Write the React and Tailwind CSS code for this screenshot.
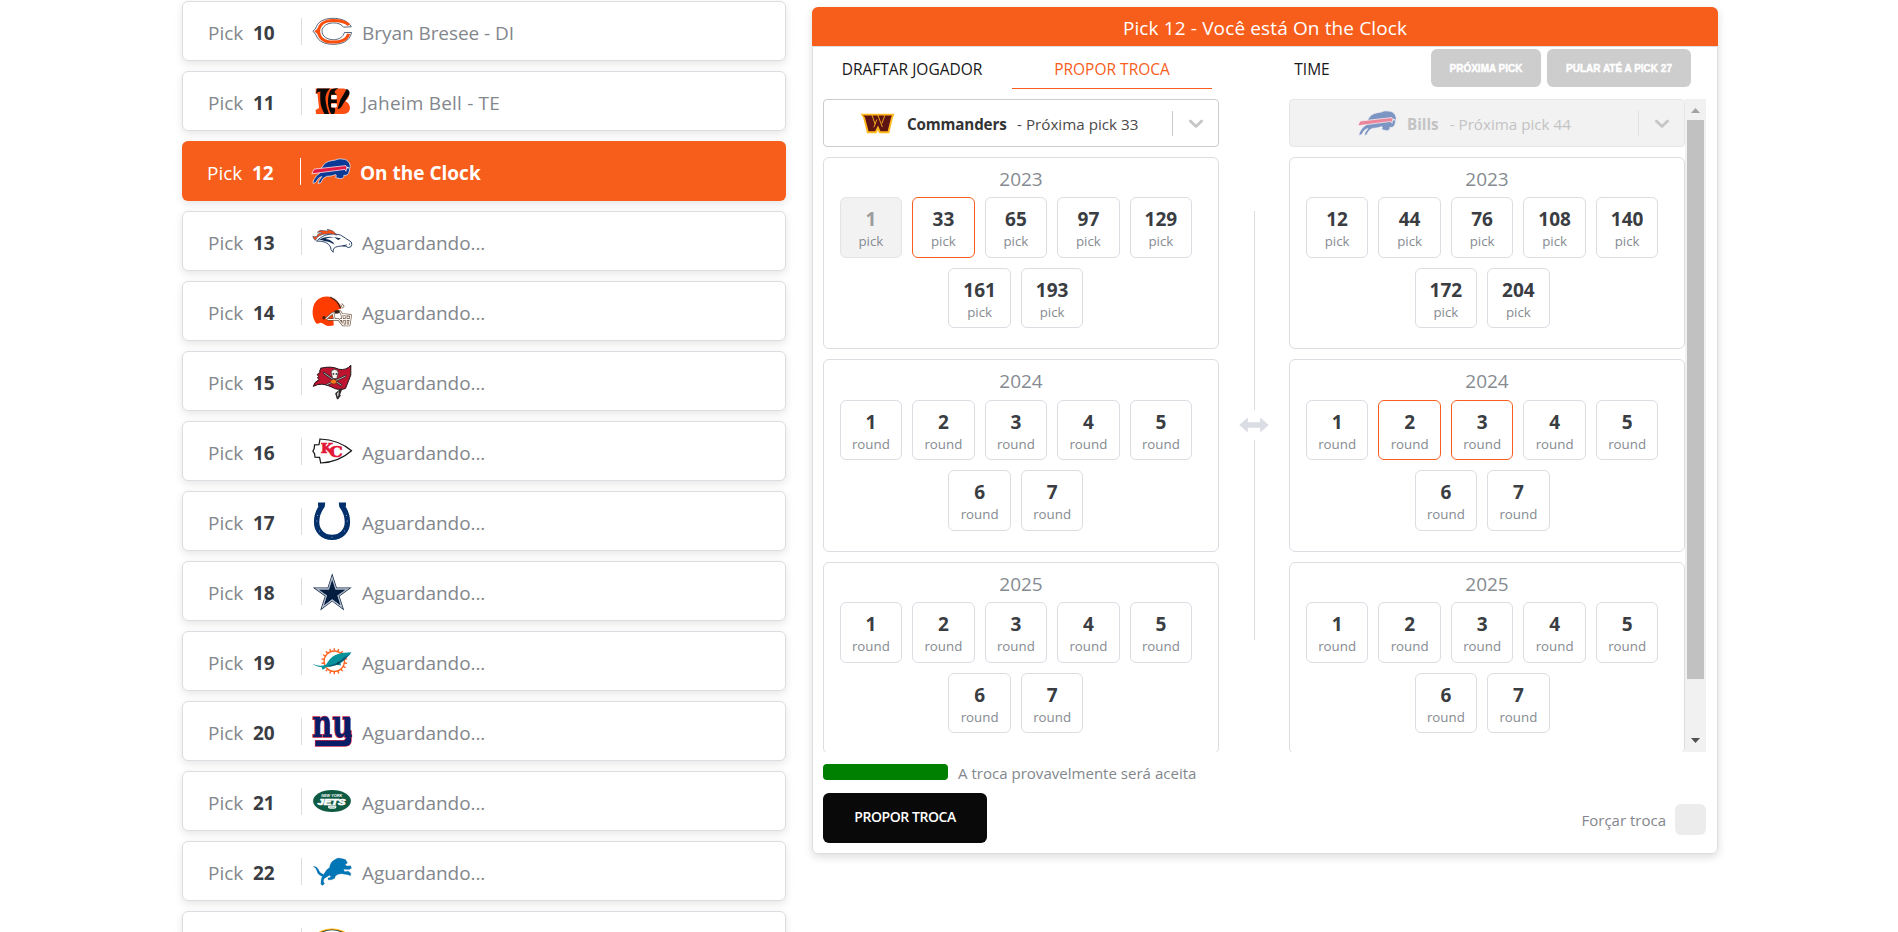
import React from "react";

const STAR = "20.2,2.3 24.8,16.5 39.7,16.5 27.6,25.2 32.2,39.4 20.2,30.6 8.2,39.4 12.8,25.2 0.7,16.5 15.6,16.5";
const RAYS = Array.from({ length: 18 }, (_, i) => i * 20);

function Bears() {
  return (
    <g>
      <path d="M39.3 15.8C36 9.5 28 7.3 21 7.3C12 7.3 6 11 4.5 15.5Q3.5 18.5 .8 20.3Q3.5 22 4.5 25C6.5 30.5 13 33.3 21 33.3C29 33.3 37.5 31 39.6 21.5H32.5C31 26 27 28.7 21.5 28.7C15 28.7 10 25 10 20.3C10 15.5 15 11.9 21.5 11.9C26 11.9 29.5 13.2 31.5 16.2Z" fill="#fff" stroke="#33425c" strokeWidth=".8" />
      <path d="M37 14C33 10.3 27 9.4 21 9.4C12 9.4 7 14 6.6 20.3C7 27 12 31.1 21 31.1C29 31.1 35 28.8 36.7 22.8" fill="none" stroke="#fb4d0c" strokeWidth="3" />
      <path d="M2.4 20.3L7.5 16V24.8Z" fill="#fb4d0c" />
    </g>
  );
}

function Bengals() {
  return (
    <g>
      <path d="M3.8 7.4H32Q38.5 8.5 37 15Q36 18.5 33.2 20Q37.6 22 38 26.5Q38 33 31.5 33H4L3.6 29L7 27L5.5 13L3.6 12.6Z" fill="#fb4f14" />
      <path d="M5 7.5H18Q13 12 13.5 19T17 33H12.5Q8.5 26 8.3 19T8.5 10.5Q6 10.5 4 12.8Z" fill="#070707" />
      <path d="M19 8.6Q23 7 26.4 7.3Q19.5 11 25 13.8H19V18.5H24.8V22H19V26.5H22.5Q24 29.5 22 33H19.2Q15.5 26 16 19T19 8.6Z" fill="#070707" />
      <path d="M34.5 8Q31 15 28.5 18.5L25.5 28Q29 28 31 23L37.3 13.5Q38.5 9 34.5 8Z" fill="#070707" />
      <rect x="19.2" y="14" width="5.6" height="4.2" rx="1.2" fill="#fff" />
      <rect x="19.2" y="22.4" width="5.6" height="4" rx="1.2" fill="#fff" />
    </g>
  );
}

function Bills() {
  return (
    <g strokeLinejoin="round">
      <path d="M10.5 17Q13.5 10.6 20.5 9.7Q24.5 9.3 27 8.1Q29 7.5 31 8.1Q36 8 38.4 12.2Q39.8 14.7 38.8 17L38.3 20Q37.6 25 32.8 24.4Q33.4 27.4 29.6 27.7L24.5 26.6Q26 24.8 24.8 23.6Q21 25.3 15.5 25.4Q11.5 26.6 9.8 31.8L7.2 32.6L8.2 29.4L10.8 25.5Q7.4 26 4.8 31.4L2.2 32.4Q1.6 31.5 2.7 29Q5.2 24 8.5 22.4Z" fill="#0a3a96" stroke="#f3f4f8" strokeWidth=".7" />
      <path d="M3 18.1L34.8 14.6Q36.4 16 35 20.2L33.8 18.4L.8 22.8Z" fill="#e31a45" stroke="#fff" strokeWidth=".7" />
      <path d="M35.5 15.5L38 16.2L37 18.2Z" fill="#fff" />
    </g>
  );
}

function Broncos() {
  return (
    <g strokeLinejoin="round">
      <path d="M4.5 20Q12 12.6 22 12.8Q29 13 33.5 17.2L39.3 21Q40.6 24 38.6 26Q36 27.3 33.8 25.3Q30 24.5 26.3 25.4Q20.4 26.2 21.2 31.2Q18.3 29 18.5 26Q17 22.8 13.4 21.3Q9 19.8 4.5 20Z" fill="#fff" stroke="#1b355b" strokeWidth=".9" />
      <path d="M6.8 18.6Q14.5 14.5 22.5 16.2Q16 16.3 13.5 18.1Q20 18.7 22.5 23.5Q17.4 20.4 12.5 20Q9.3 19 6.8 18.6Z" fill="#0c2a52" />
      <path d="M22 16L29 17.6L26.2 19Z" fill="#0c2a52" />
      <path d="M3.2 19.4Q6 13.5 14 13Q21 12.1 24.7 14.2Q21.5 8.7 15 8.4Q18.5 10.4 12.5 9.7Q7.2 8.5 5.4 11.3Q9.4 10.6 10.2 12.2Q5.4 11.8 5 15.3Q3 16.4 .8 15.1Q1 17.5 3.2 19.4Z" fill="#fb4f14" stroke="#1b355b" strokeWidth=".5" />
      <path d="M30.5 24.8L34.8 24M37 23.4L38 22.8" stroke="#1b355b" strokeWidth="1" />
    </g>
  );
}

function Browns() {
  return (
    <g>
      <path d="M4.3 32.5Q.4 27.5 .6 20Q1.2 11.5 6.5 8Q13.5 3.8 20.3 7Q28 10.2 29.7 17.2L22.6 20.2Q20.5 23 21.2 26.8L21.8 34.3Q15.5 35.9 12.5 33.4Q8.5 30.6 6.3 32.8Z" fill="#ff3c00" />
      <path d="M18.5 6.1Q25.5 8.8 28.5 17.2" fill="none" stroke="#382016" strokeWidth="1.4" />
      <path d="M19.6 6Q26.5 8.3 29.7 16.6" fill="none" stroke="#f5eee7" strokeWidth=".8" />
      <circle cx="12" cy="26.7" r="1.8" fill="#50200d" />
      <path d="M29.3 16.5L31.2 15.3L29.2 13.1M13.8 27.8L20.5 22.2L28 20.5L30 23.4L38.7 24.3L37.2 34.1L31 34L26.5 28.5H15.5M29.7 23.4L31.5 34M34 24L34.4 34M21 22.2L22.5 28.5M28 28.5H38" fill="none" stroke="#6d5543" strokeWidth="2.4" strokeLinejoin="round" />
      <path d="M29.3 16.5L31.2 15.3L29.2 13.1M13.8 27.8L20.5 22.2L28 20.5L30 23.4L38.7 24.3L37.2 34.1L31 34L26.5 28.5H15.5M29.7 23.4L31.5 34M34 24L34.4 34M21 22.2L22.5 28.5M28 28.5H38" fill="none" stroke="#fffaf5" strokeWidth="1.1" strokeLinejoin="round" />
      <ellipse cx="25" cy="20.8" rx="2.8" ry="1.8" fill="#382016" />
    </g>
  );
}

function Buccaneers() {
  return (
    <g strokeLinejoin="round" strokeLinecap="round">
      <path d="M38.5 5L26 37" stroke="#2b2727" strokeWidth="1.5" />
      <path d="M9 7.2Q19 4.5 27 8.3Q34 9.6 38.8 4.4L38.8 14L33.5 27.5Q26.5 30 20 26.2Q9.5 20.6 1.3 25.4Q2 21 7.2 18.6Q4 16.8 6.6 15.4Q3.5 13 8 11.8Q6.8 10 9 7.2Z" fill="#bd1530" stroke="#24191c" strokeWidth="1" />
      <path d="M12 12L29 24M33.5 15L15 23.8" stroke="#32292c" strokeWidth="2.2" />
      <path d="M12.2 12.2L29 24M33.3 15.2L15 23.6" stroke="#cfc8c8" strokeWidth=".8" />
      <path d="M19.2 11.4Q19.2 8.5 22.6 8.5T26.2 11.8L25.5 14.8L24.8 17.6H20.8L20 15Z" fill="#f6f3f1" stroke="#40383b" strokeWidth=".8" />
      <circle cx="21.4" cy="12.9" r=".9" fill="#332b2c" />
      <circle cx="24.4" cy="12.9" r=".9" fill="#332b2c" />
      <ellipse cx="21.6" cy="20.7" rx="3.2" ry="2.2" fill="#ff7a1a" stroke="#46241a" strokeWidth=".5" />
      <path d="M28.5 28L26.6 33M27.5 29.5L24 32.5L25.5 37.5L28 34.5" fill="none" stroke="#2f2c2c" strokeWidth="1.6" />
      <path d="M26.5 31L25.8 34.8" stroke="#bdbaba" strokeWidth="1" />
    </g>
  );
}

function Chiefs() {
  return (
    <g>
      <path d="M8 8Q27 9 39.5 19.7Q27 31 8.7 32L7.6 26.4L3 26.2L2.6 22.7L.9 20.2L2.2 17.5L2.5 13.9L7 13.6Z" fill="#fff" stroke="#151515" strokeWidth="1.2" />
      <text x="8.8" y="22" fontSize="13" fontFamily="DejaVu Serif, serif" fontWeight="700" fill="#e31837" stroke="#e31837" strokeWidth=".7" textLength="22" lengthAdjust="spacingAndGlyphs">
        K<tspan dx="-3.6" dy="3.8" fontSize="15.5">C</tspan>
      </text>
    </g>
  );
}

function Colts() {
  return (
    <g>
      <path d="M10.5 4.3C6.9 9 4.6 14.5 4.6 21C4.6 30 11 36.4 20 36.4S35.4 30 35.4 21C35.4 14.5 33.1 9 29.5 4.3" fill="none" stroke="#03306b" strokeWidth="5.4" />
      <path d="M6 1.6L13.2 1.4L12.8 5.4L10.8 7.6L6 5Z M26.8 1.4L34 1.6L34 5L29.2 7.6L27.2 5.4Z" fill="#03306b" />
      <g fill="#b9c8d8">
        <circle cx="5.7" cy="14.4" r=".5" /><circle cx="4.8" cy="20" r=".5" /><circle cx="7.6" cy="30" r=".5" />
        <circle cx="20" cy="36.3" r=".5" /><circle cx="32.4" cy="30" r=".5" /><circle cx="35.2" cy="20" r=".5" /><circle cx="34.3" cy="14.4" r=".5" />
      </g>
    </g>
  );
}

function Cowboys() {
  return (
    <g>
      <polygon points={STAR} fill="#13294b" />
      <polygon points={STAR} fill="#d5dbe3" transform="translate(20.2 22.8) scale(.88) translate(-20.2 -22.8)" />
      <polygon points={STAR} fill="#6f819b" transform="translate(20.2 22.8) scale(.8) translate(-20.2 -22.8)" />
      <polygon points={STAR} fill="#fff" transform="translate(20.2 22.8) scale(.75) translate(-20.2 -22.8)" />
      <polygon points={STAR} fill="#041e42" transform="translate(20.2 22.8) scale(.7) translate(-20.2 -22.8)" />
    </g>
  );
}

function Dolphins() {
  return (
    <g>
      <circle cx="22.3" cy="20.2" r="10.2" fill="#fff" stroke="#fc6a22" strokeWidth="1.4" />
      <g stroke="#fc5a1c" strokeWidth="1.3">
        {RAYS.map((a) => (
          <path key={a} d="M22.3 9.8V7.2" transform={`rotate(${a} 22.3 20.2)`} />
        ))}
      </g>
      <path d="M.5 22.8Q7 26.3 14 23.7Q19 14.3 27.3 12.8Q30.5 11.3 33 11.8Q36.5 11 39.3 11.3Q38.8 13.2 35.3 15.4Q32.5 19.8 28.5 22Q29.3 23.4 28.7 24.5Q26 24 24.4 23.6Q18.5 26.2 13.5 26.2Q13.4 28 10.2 28.4Q10.5 26.8 9.2 26.1Q3.5 25.8 .5 22.8Z" fill="#08929b" />
      <path d="M16 24.7Q27 22.6 31.4 16.7L38.8 12.8Q34 17.4 31 20Q24.5 25.6 16 25.6Z" fill="#075a76" />
      <path d="M27 20.3L26 24.5L24.8 22Z" fill="#07384f" />
    </g>
  );
}

function Giants() {
  return (
    <g>
      <path d="M3.6 29.7H31.5Q34.2 29.5 34.2 26V20H39V30Q38.5 35 33 35H3.6Z" fill="#071d67" stroke="#c42a4e" strokeWidth="1.4" paintOrder="stroke" />
      <text x="0" y="26.2" fontSize="38.6" fontFamily="DejaVu Serif, serif" fontWeight="700" fill="#071d67" stroke="#c42a4e" strokeWidth="1.4" paintOrder="stroke" textLength="40.3" lengthAdjust="spacingAndGlyphs">nu</text>
      <path d="M34.3 7V27Q34 30 31.5 30.4V34.4Q38.3 35.5 38.5 30V7Z" fill="#071d67" />
    </g>
  );
}

function Jets() {
  return (
    <g fontFamily="Liberation Sans, sans-serif" fontWeight="700" fontStyle="italic" fill="#fff">
      <ellipse cx="20" cy="20" rx="18.9" ry="11" fill="#0f5a42" />
      <text x="9.3" y="16.2" fontSize="4" textLength="21" lengthAdjust="spacingAndGlyphs">NEW YORK</text>
      <text x="5.6" y="23.6" fontSize="8.8" stroke="#fff" strokeWidth=".7" textLength="28" lengthAdjust="spacingAndGlyphs">JETS</text>
      <ellipse cx="20.2" cy="25.8" rx="4.2" ry="2.3" />
      <path d="M16.5 24.8H24M17.5 27H23" stroke="#0f5a42" strokeWidth=".6" />
    </g>
  );
}

function Lions() {
  return (
    <path
      d="M1.2 15.6Q4.6 14.8 6.2 18Q7.5 22 11.6 23.5Q13.5 18.8 17.5 16.5Q18.3 11 22.5 8.8Q25.8 6 28.5 7.3L33.5 8.4L35.5 12L33.2 13.6L34.8 15L38.7 14.8L39.5 17.2L37 18.6L31.6 18.3L32.4 20.4L36.4 20.2L38.8 22.2L38.5 24.7L35.8 23.7L29.5 22.8Q25 23 23.2 25.4L22.8 27.2L19.6 28.8L16 28.8V27L19 26L17.5 24.3Q14 26.6 11.8 28L11.5 31L12.6 32.5L10.8 34.4L8.8 33.2L9.2 28.5L10.2 25.2Q5.8 24 4.8 19.7Q4.3 17 1.2 15.6Z"
      fill="#0076b6"
      stroke="#c8d2dc"
      strokeWidth=".8"
      paintOrder="stroke"
    />
  );
}

function Packers() {
  return (
    <g>
      <ellipse cx="20" cy="20" rx="19" ry="12.6" fill="#ffb612" />
      <ellipse cx="20" cy="20" rx="17.8" ry="11.5" fill="#203731" />
      <ellipse cx="20" cy="20" rx="13" ry="8.6" fill="none" stroke="#fff" strokeWidth="4.5" />
      <path d="M20 19H37V23H20Z" fill="#fff" />
    </g>
  );
}

function Commanders() {
  return (
    <g>
      <path d="M.8 8.8H39.4L37.6 13.4L33.4 31H21.8L20.4 27.6L18.8 31H8L3.6 13.4Z" fill="#ffb81c" />
      <path d="M3.6 10.8H36.6L35.6 12.8L31.6 28.8H23.4L20.6 22.4L17.2 28.8H9.8L5.6 12.8Z" fill="#5f1414" />
      <path d="M13.4 9.6L17.4 21M19.2 15.4L15.8 24.4M20 9.6L25.6 24M28.4 10.6L25 20" fill="none" stroke="#ffb81c" strokeWidth="1" />
    </g>
  );
}

function Logo({ team: Team, className = "size-10" }) {
  return (
    <svg viewBox="0 0 40 40" className={`${className} shrink-0 overflow-visible`} aria-hidden="true">
      <Team />
    </svg>
  );
}

const WAITING = "Aguardando...";

const PICKS = [
  [10, Bears, "Bryan Bresee - DI", "tracking-[-0.05px]"],
  [11, Bengals, "Jaheim Bell - TE", "tracking-[0.2px]"],
  [12, Bills, "On the Clock", "font-bold tracking-[0px]"],
  [13, Broncos, WAITING],
  [14, Browns, WAITING],
  [15, Buccaneers, WAITING],
  [16, Chiefs, WAITING],
  [17, Colts, WAITING],
  [18, Cowboys, WAITING],
  [19, Dolphins, WAITING],
  [20, Giants, WAITING],
  [21, Jets, WAITING],
  [22, Lions, WAITING],
  [23, Packers, WAITING],
];

function PickRow({ number, team, label, labelClass = "tracking-[-0.07px]" }) {
  const active = number === 12;
  return (
    <li
      className={
        "flex h-[60px] shrink-0 items-center rounded-md text-[19px] leading-6 shadow-[0_3px_8px_rgba(0,0,0,0.1)] " +
        (active ? "bg-[#f75e1c] pl-[25px] text-white" : "border border-[#dcdde3] bg-white pl-[25px] text-[#83878d]")
      }
    >
      <span className="w-[45px] pt-1">Pick</span>
      <span className={"w-[48px] pt-1 font-bold " + (active ? "text-white" : "text-[#3a3d42]")}>{number}</span>
      <span className={"h-[27px] w-px " + (active ? "bg-white" : "bg-[#dcdde3]")} />
      <span className="ml-2.5 flex">
        <Logo team={team} />
      </span>
      <span className={(active ? "ml-[9px] " : "ml-2.5 ") + "pt-1 " + labelClass}>{label}</span>
    </li>
  );
}

function PickCard({ value, unit, state }) {
  const look =
    state === "selected"
      ? "border-[#f75e1c] bg-white"
      : state === "disabled"
        ? "border-[#e3e4e7] bg-[#f2f2f2]"
        : "border-[#dcdde3] bg-white";
  return (
    <div className={"flex h-[60.6px] w-[62.5px] flex-col items-center rounded-md border pt-[9px] " + look}>
      <span className={"text-[19px] leading-6 font-bold " + (state === "disabled" ? "text-[#9d9d9d]" : "text-[#3a3d42]")}>{value}</span>
      <span className="text-[13.3px] leading-5 text-[#868b91]">{unit}</span>
    </div>
  );
}

function YearCard({ year, values, unit, selected = [], disabled = [], inset = "ml-[15.6px]" }) {
  return (
    <section className="h-[192.4px] shrink-0 rounded-md border border-[#dcdde3] pt-[9px]">
      <h3 className="mb-[6.2px] text-center text-[19px] leading-6 text-[#868b91]">{year}</h3>
      <div className={"flex w-[352.6px] flex-wrap justify-center gap-[10px] " + inset}>
        {values.map((v) => (
          <PickCard
            key={v}
            value={v}
            unit={unit}
            state={selected.includes(v) ? "selected" : disabled.includes(v) ? "disabled" : "normal"}
          />
        ))}
      </div>
    </section>
  );
}

function Chevron() {
  return (
    <svg viewBox="0 0 20 20" className="size-6" fill="#c6c6c6" aria-hidden="true">
      <path d="M4.516 7.548c0.436-0.446 1.043-0.481 1.576 0l3.908 3.747 3.908-3.747c0.533-0.481 1.141-0.446 1.574 0 0.436 0.445 0.408 1.197 0 1.615-0.406 0.418-4.695 4.502-4.695 4.502-0.217 0.223-0.502 0.335-0.787 0.335s-0.57-0.112-0.789-0.335c0 0-4.287-4.084-4.695-4.502s-0.436-1.17 0-1.615z" />
    </svg>
  );
}

const ROUNDS = [1, 2, 3, 4, 5, 6, 7];

function Tab({ children, active }) {
  return (
    <div
      className={
        "flex h-[42px] w-[200px] justify-center pt-[10px] text-[15.5px] leading-6 " +
        (active ? "border-b border-[#f75e1c] text-[#f75e1c]" : "text-[#17181a]")
      }
    >
      {children}
    </div>
  );
}

function SkipButton({ children, className }) {
  return (
    <button className={"h-[38px] rounded-md bg-[#cdcdcd] pt-px font-['Liberation_Sans',sans-serif] text-[10px] font-bold whitespace-nowrap text-white [-webkit-text-stroke:0.4px_white] " + className}>
      {children}
    </button>
  );
}

export default function App() {
  return (
    <main className="flex h-[932px] w-full items-start overflow-hidden bg-white pl-[182px] font-['Open_Sans','Noto_Sans',sans-serif]">
      <ul className="flex h-[932px] w-[604px] flex-col gap-[10px] pt-px">
        {PICKS.map(([number, team, label, labelClass]) => (
          <PickRow key={number} number={number} team={team} label={label} labelClass={labelClass} />
        ))}
      </ul>

      <div className="mt-[7px] ml-[26px] flex h-[847px] w-[906px] flex-col rounded-md shadow-[0_3px_8px_rgba(0,0,0,0.14)]">
        <header className="h-[39px] shrink-0 rounded-t-md bg-[#f75e1c] pt-[9px] text-center text-[19px] leading-6 tracking-[0.13px] text-white">
          Pick 12 - Você está On the Clock
        </header>
        <div className="flex grow flex-col rounded-b-md border border-[#dcdde3]">
          <nav className="-ml-px flex h-[52px] shrink-0">
            <Tab>DRAFTAR JOGADOR</Tab>
            <Tab active>PROPOR TROCA</Tab>
            <Tab>TIME</Tab>
            <div className="ml-[19px] flex gap-1.5 pt-[2px]">
              <SkipButton className="w-[110px]">PRÓXIMA PICK</SkipButton>
              <SkipButton className="w-[144px]">PULAR ATÉ A PICK 27</SkipButton>
            </div>
          </nav>

          <div className="ml-[10px] flex h-[653px] w-[883px] shrink-0 overflow-hidden">
            <div className="flex w-[396px] shrink-0 flex-col gap-[10px]">
              <div className="flex h-[48px] shrink-0 items-center rounded border border-[#cccccc] text-[15.2px] text-[#4a4a4a]">
                <span className="ml-[36px] flex">
                  <Logo team={Commanders} className="size-[35px]" />
                </span>
                <span className="ml-[12px] pt-0.5 font-bold tracking-[-0.15px] text-[#333333]">Commanders</span>
                <span className="ml-[10.5px] pt-0.5">- Próxima pick 33</span>
                <span className="ml-auto h-[25px] w-px bg-[#cccccc]" />
                <span className="mr-[10.5px] ml-[10.5px]">
                  <Chevron />
                </span>
              </div>
              <YearCard year="2023" unit="pick" values={[1, 33, 65, 97, 129, 161, 193]} selected={[33]} disabled={[1]} />
              <YearCard year="2024" unit="round" values={ROUNDS} />
              <YearCard year="2025" unit="round" values={ROUNDS} />
            </div>

            <div className="flex w-[70px] shrink-0 flex-col items-center pt-[112px]">
              <span className="h-[199px] w-px bg-[#dcdde3]" />
              <svg viewBox="0 0 30 16" className="my-[7px] h-4 w-[30px]" fill="#dbdde4" aria-hidden="true">
                <path d="M.3 8L8.8 .5V5.2H21.2V.5L29.7 8L21.2 15.5V10.8H8.8V15.5Z" />
              </svg>
              <span className="h-[200px] w-px bg-[#dcdde3]" />
            </div>

            <div className="flex w-[396px] shrink-0 flex-col gap-[10px]">
              <div className="flex h-[48px] shrink-0 items-center rounded border border-[#e6e6e6] bg-[#f2f2f2] text-[15.2px] text-[#c3c3c3]">
                <span className="ml-[67px] flex opacity-50">
                  <Logo team={Bills} />
                </span>
                <span className="ml-[10px] pt-0.5 font-bold">Bills</span>
                <span className="ml-[11px] pt-0.5">- Próxima pick 44</span>
                <span className="ml-auto h-[25px] w-px bg-[#e0e0e0]" />
                <span className="mr-[10.5px] ml-[10.5px]">
                  <Chevron />
                </span>
              </div>
              <YearCard year="2023" unit="pick" values={[12, 44, 76, 108, 140, 172, 204]} inset="ml-[15.8px]" />
              <YearCard year="2024" unit="round" values={ROUNDS} selected={[2, 3]} inset="ml-[15.8px]" />
              <YearCard year="2025" unit="round" values={ROUNDS} inset="ml-[15.8px]" />
            </div>

            <div className="flex w-[21px] shrink-0 flex-col items-center bg-[#f1f1f1]">
              <svg viewBox="0 0 21 21" className="h-[21px] w-[21px] shrink-0" fill="#a3a3a3" aria-hidden="true">
                <path d="M6 14L10.5 9L15 14Z" />
              </svg>
              <span className="h-[559px] w-[17px] bg-[#c1c1c1]" />
              <svg viewBox="0 0 21 21" className="mt-auto h-[21px] w-[21px] shrink-0" fill="#505050" aria-hidden="true">
                <path d="M6 7L10.5 12L15 7Z" />
              </svg>
            </div>
          </div>

          <div className="ml-[10px] flex h-8 items-start gap-[10px] pt-[8px] text-[15.05px] leading-6 text-[#83878d]">
            <span className="mt-[4px] h-4 w-[125px] rounded bg-[#008000]" />
            <span className="pt-px">A troca provavelmente será aceita</span>
          </div>
          <div className="ml-[10px] flex w-[883px] items-start justify-between pt-[9px]">
            <button className="h-[50px] w-[164px] rounded-md bg-[#090909] pb-[3px] text-[14px] font-semibold tracking-[-0.45px] text-white">PROPOR TROCA</button>
            <label className="flex items-center gap-[9px] pt-[11px] text-[15px] leading-6 text-[#83878d]">
              <span className="pt-px">Forçar troca</span>
              <span className="size-[31px] rounded-md bg-[#ececec]" />
            </label>
          </div>
        </div>
      </div>
    </main>
  );
}
